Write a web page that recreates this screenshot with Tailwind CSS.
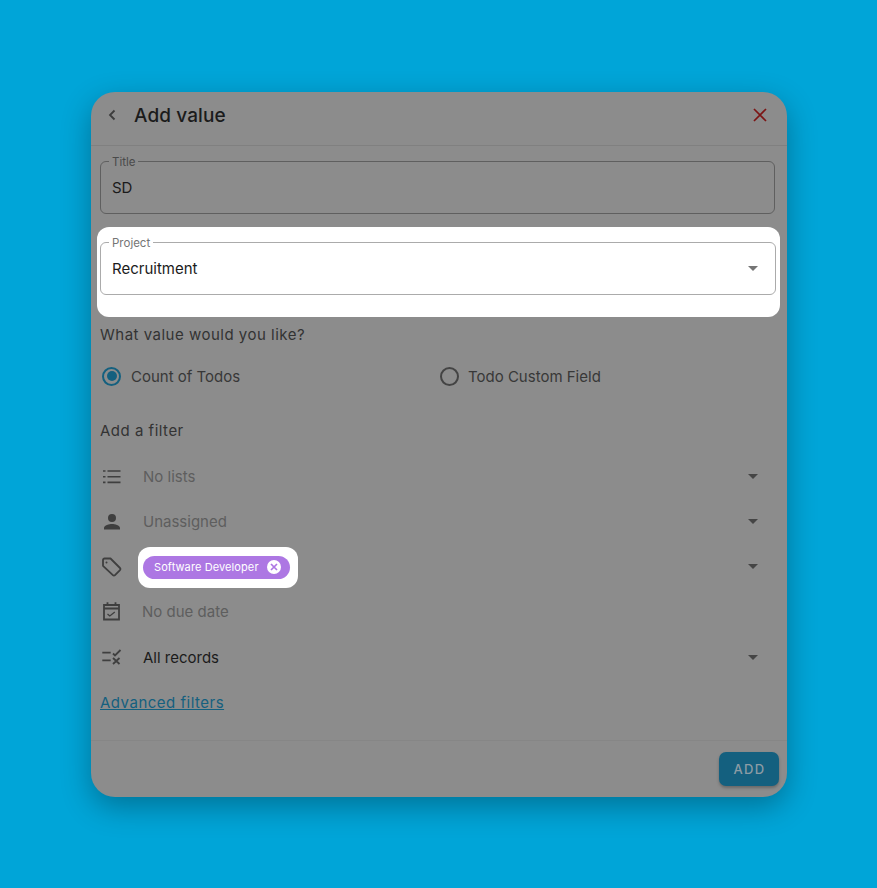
<!DOCTYPE html>
<html lang="en">
<head>
    <meta charset="UTF-8">
    <title>Add value</title>
    <script src="https://cdn.jsdelivr.net/npm/@tailwindcss/browser@4"></script>
</head>
<body class="bg-[#00a5d8] h-[888px] overflow-hidden font-['Inter',sans-serif]">
    <div class="pt-[92px] pl-[91px]">
        <!-- Dialog -->
        <div class="w-[696px] h-[705px] bg-[#8c8c8c] rounded-[24px] shadow-[0_10px_30px_rgba(0,0,0,0.3)] flex flex-col">
            <!-- Header -->
            <div class="h-[54px] shrink-0 flex items-center justify-between pl-[14px] pr-[18px] pb-[8px] border-b border-[#808080]">
                <div class="flex items-center">
                    <svg class="w-[14px] h-[14px] text-[#3c3c3c]" viewBox="0 0 14 14" fill="none" stroke="currentColor" stroke-width="1.800"><path d="M9.500 2.500 5 7l4.500 4.500"/></svg>
                    <h1 class="ml-[15px] mt-[4px] text-[19px] font-medium text-[#1b1b1b] tracking-[0.1px]">Add value</h1>
                </div>
                <svg class="w-[18px] h-[18px] text-[#7c1414]" viewBox="0 0 18 18" fill="none" stroke="currentColor" stroke-width="1.700"><path d="M3 3l12 12M15 3 3 15"/></svg>
            </div>

            <div class="flex-1 flex flex-col px-[9px]">
                <!-- Title -->
                <div class="relative h-[53px] mt-[15px] mr-[3px] border border-[#5f5f5f] rounded-[6px] flex items-center px-[11px] pt-[2px]">
                    <span class="absolute left-[8px] -top-[6px] bg-[#8c8c8c] px-[3px] text-[11.500px] leading-[13px] text-[#4a4a4a]">Title</span>
                    <span class="text-[15px] text-[#1b1b1b]">SD</span>
                </div>

                <!-- Project, highlighted -->
                <div class="h-[90px] mt-[13px] -ml-[3px] mr-[-2px] pt-[15px] pl-[3px] pr-[4px] bg-white rounded-[12px]">
                    <div class="relative h-[53px] border border-[#ababab] rounded-[6px] flex items-center justify-between pl-[11px] pr-[17px]">
                        <span class="absolute left-[8px] -top-[6px] bg-white px-[3px] text-[11.500px] leading-[13px] text-[#757575]">Project</span>
                        <span class="mt-[2px] text-[15px] text-[#1b1b1b]">Recruitment</span>
                        <svg class="w-[10px] h-[5px] text-[#757575]" viewBox="0 0 10 5" fill="currentColor"><path d="M0 0h10L5 5z"/></svg>
                    </div>
                </div>

                <p class="mt-[9px] text-[15px] leading-[18px] tracking-[0.5px] text-[#333333]">What value would you like?</p>

                <!-- Value type -->
                <div class="mt-[22px] flex items-center h-[20px]">
                    <div class="w-[340px] flex items-center">
                        <span class="ml-[2px] w-[19px] h-[19px] rounded-full border-2 border-[#14607f] flex items-center justify-center">
                            <span class="w-[10px] h-[10px] rounded-full bg-[#14607f]"></span>
                        </span>
                        <span class="ml-[10px] mt-[2px] text-[15px] text-[#383838]">Count of Todos</span>
                    </div>
                    <span class="w-[19px] h-[19px] rounded-full border-2 border-[#444444]"></span>
                    <span class="ml-[9px] mt-[2px] text-[15px] text-[#383838]">Todo Custom Field</span>
                </div>

                <p class="mt-[36px] text-[15px] leading-[18px] tracking-[0.5px] text-[#333333]">Add a filter</p>

                <!-- Filter rows -->
                <div class="mt-[14px] flex flex-col">
                    <div class="h-[45px] flex items-center pr-[20px]">
                        <svg class="w-[24px] h-[24px] text-[#3f3f3f]" viewBox="0 0 24 24" fill="none" stroke="currentColor" stroke-width="1.600"><path d="M7.500 6h13M7.500 11.700h13M7.500 17.400h13"/><path d="M3 6h2.500M3 11.700h2.500M3 17.400h2.500" stroke-dasharray="2.500 0"/></svg>
                        <span class="ml-[19px] mt-[2px] flex-1 text-[15px] text-[#5e5e5e]">No lists</span>
                        <svg class="w-[10px] h-[5px] text-[#454545]" viewBox="0 0 10 5" fill="currentColor"><path d="M0 0h10L5 5z"/></svg>
                    </div>
                    <div class="h-[45px] flex items-center pr-[20px]">
                        <svg class="w-[24px] h-[24px] text-[#3f3f3f]" viewBox="0 0 24 24" fill="currentColor"><path d="M12 12a4 4 0 1 0 0-8 4 4 0 0 0 0 8zm0 2c-2.700 0-8 1.300-8 4v1.500h16V18c0-2.700-5.300-4-8-4z"/></svg>
                        <span class="ml-[19px] mt-[2px] flex-1 text-[15px] text-[#5e5e5e]">Unassigned</span>
                        <svg class="w-[10px] h-[5px] text-[#454545]" viewBox="0 0 10 5" fill="currentColor"><path d="M0 0h10L5 5z"/></svg>
                    </div>
                    <div class="h-[45px] flex items-center pr-[20px]">
                        <svg class="w-[24px] h-[24px] text-[#3f3f3f]" viewBox="0 0 24 24" fill="none" stroke="currentColor" stroke-width="1.800" stroke-linejoin="round"><path d="M3 5c0-.800.700-1.500 1.500-1.500h6l9.500 9.500c.600.600.600 1.500 0 2.100l-5 5c-.600.600-1.500.600-2.100 0L3 10.800z"/><circle cx="6.500" cy="7.500" r="1" fill="currentColor" stroke="none"/></svg>
                        <!-- Label chip, highlighted -->
                        <div class="ml-[14px] mt-[1px] h-[41px] pl-[5px] pr-[8px] bg-white rounded-[12px] flex items-center">
                            <div class="h-[23px] pl-[11px] pr-[9px] bg-[#ad77e3] rounded-full flex items-center">
                                <span class="text-[11px] tracking-[0.1px] text-white">Software Developer</span>
                                <span class="ml-[8px] w-[14px] h-[14px] rounded-full bg-white flex items-center justify-center">
                                    <svg class="w-[8px] h-[8px] text-[#ad77e3]" viewBox="0 0 8 8" fill="none" stroke="currentColor" stroke-width="1.700"><path d="M1 1l6 6M7 1 1 7"/></svg>
                                </span>
                            </div>
                        </div>
                        <div class="flex-1"></div>
                        <svg class="w-[10px] h-[5px] text-[#454545]" viewBox="0 0 10 5" fill="currentColor"><path d="M0 0h10L5 5z"/></svg>
                    </div>
                    <div class="h-[45px] flex items-center pr-[20px]">
                        <svg class="w-[24px] h-[24px] text-[#3f3f3f]" viewBox="0 0 24 24" fill="none" stroke="currentColor" stroke-width="2"><path d="M4 5h15v14.500H4zM4 8.500h15" stroke-width="1.800"/><path d="M7.500 2.300V5M15.500 2.300V5" stroke-width="1.800"/><path d="M7.500 14l2.300 2 5-4" stroke-width="1.300"/></svg>
                        <span class="ml-[18px] mt-[2px] flex-1 text-[15px] text-[#5e5e5e]">No due date</span>
                    </div>
                    <div class="h-[46px] flex items-center pr-[20px]">
                        <svg class="w-[24px] h-[24px] text-[#3f3f3f]" viewBox="0 0 24 24" fill="none" stroke="currentColor" stroke-width="1.800"><path d="M2.300 7.700h8.400M2.300 15.300h8.400"/><path d="M13 8.500l2 2 5.500-5.500M13 13l6.500 6M19.500 13 13 19"/></svg>
                        <span class="ml-[19px] mt-[2px] flex-1 text-[15px] text-[#1b1b1b]">All records</span>
                        <svg class="w-[10px] h-[5px] text-[#454545]" viewBox="0 0 10 5" fill="currentColor"><path d="M0 0h10L5 5z"/></svg>
                    </div>
                </div>

                <a class="mt-[14px] text-[15px] leading-[18px] tracking-[0.5px] underline text-[#14607f]" href="#">Advanced filters</a>
            </div>

            <!-- Footer -->
            <div class="h-[57px] shrink-0 border-t border-[#868686] flex items-start justify-end pt-[11px] pr-[8px]">
                <button class="w-[60px] h-[34px] pt-[1px] pl-[1px] rounded-[7px] bg-[#14607f] text-[13px] font-medium tracking-[1.400px] text-[#8c9ca5] shadow-[0_2px_3px_rgba(0,0,0,0.25)]">ADD</button>
            </div>
        </div>
    </div>
</body>
</html>
